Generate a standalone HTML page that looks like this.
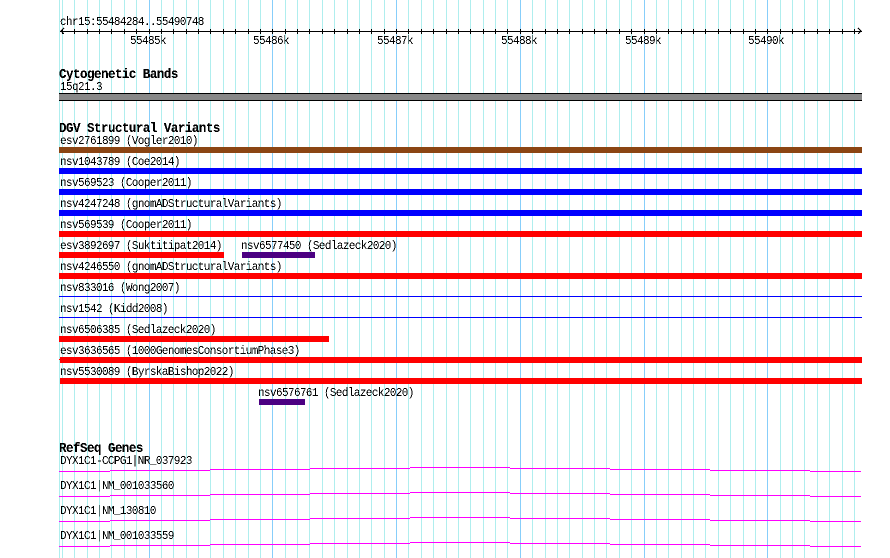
<!DOCTYPE html>
<html>
<head>
<meta charset="utf-8">
<title>chr15:55484284..55490748</title>
<style>
html,body{margin:0;padding:0;background:#fff;width:890px;height:558px;overflow:hidden}
svg{display:block}
text{font-family:"Liberation Mono",monospace;font-size:11px;letter-spacing:-.6px;fill:#000;white-space:pre}
.b{font-weight:bold;font-size:12.5px;letter-spacing:-.5px}
</style>
</head>
<body>
<svg width="890" height="558" viewBox="0 0 890 558" xmlns="http://www.w3.org/2000/svg">
<defs>
<filter id="a" filterUnits="userSpaceOnUse" x="0" y="0" width="890" height="558" color-interpolation-filters="sRGB">
<feComponentTransfer><feFuncA type="discrete" tableValues="0 1"/></feComponentTransfer>
</filter>
<filter id="c" filterUnits="userSpaceOnUse" x="0" y="0" width="890" height="558" color-interpolation-filters="sRGB">
<feComponentTransfer><feFuncA type="discrete" tableValues="0 0 1 1 1"/></feComponentTransfer>
</filter>
</defs>
<g shape-rendering="crispEdges" fill="none">
<path stroke="#afeeee" d="M59.5 0V558M62.5 0V558M74.5 0V558M87.5 0V558M99.5 0V558M111.5 0V558M124.5 0V558M136.5 0V558M161.5 0V558M173.5 0V558M186.5 0V558M198.5 0V558M210.5 0V558M223.5 0V558M235.5 0V558M248.5 0V558M260.5 0V558M285.5 0V558M297.5 0V558M309.5 0V558M322.5 0V558M334.5 0V558M347.5 0V558M359.5 0V558M371.5 0V558M384.5 0V558M408.5 0V558M421.5 0V558M433.5 0V558M446.5 0V558M458.5 0V558M470.5 0V558M483.5 0V558M495.5 0V558M507.5 0V558M532.5 0V558M545.5 0V558M557.5 0V558M569.5 0V558M582.5 0V558M594.5 0V558M606.5 0V558M619.5 0V558M631.5 0V558M656.5 0V558M668.5 0V558M681.5 0V558M693.5 0V558M705.5 0V558M718.5 0V558M730.5 0V558M743.5 0V558M755.5 0V558M780.5 0V558M792.5 0V558M804.5 0V558M817.5 0V558M829.5 0V558M842.5 0V558M854.5 0V558"/>
<path stroke="#87cefa" d="M149.5 0V558M272.5 0V558M396.5 0V558M520.5 0V558M644.5 0V558M767.5 0V558"/>
<path stroke="#000" d="M60 31.5H862M62.5 29V34M74.5 29V34M87.5 29V34M99.5 29V34M111.5 29V34M124.5 29V34M136.5 29V34M149.5 29V34M161.5 29V34M173.5 29V34M186.5 29V34M198.5 29V34M210.5 29V34M223.5 29V34M235.5 29V34M248.5 29V34M260.5 29V34M272.5 29V34M285.5 29V34M297.5 29V34M309.5 29V34M322.5 29V34M334.5 29V34M347.5 29V34M359.5 29V34M371.5 29V34M384.5 29V34M396.5 29V34M408.5 29V34M421.5 29V34M433.5 29V34M446.5 29V34M458.5 29V34M470.5 29V34M483.5 29V34M495.5 29V34M507.5 29V34M520.5 29V34M532.5 29V34M545.5 29V34M557.5 29V34M569.5 29V34M582.5 29V34M594.5 29V34M606.5 29V34M619.5 29V34M631.5 29V34M644.5 29V34M656.5 29V34M668.5 29V34M681.5 29V34M693.5 29V34M705.5 29V34M718.5 29V34M730.5 29V34M743.5 29V34M755.5 29V34M767.5 29V34M780.5 29V34M792.5 29V34M804.5 29V34M817.5 29V34M829.5 29V34M842.5 29V34M854.5 29V34"/>
<path stroke="#000" d="M64 28L61 31L64 34M858 28L861 31L858 34"/>
<rect x="59" y="93" width="803" height="8" fill="#000"/>
<rect x="59" y="94" width="803" height="6" fill="#888888"/>
<rect x="59" y="147" width="803" height="6" fill="#8b4513"/>
<rect x="59" y="168" width="803" height="6" fill="#0000ff"/>
<rect x="59" y="189" width="803" height="6" fill="#0000ff"/>
<rect x="59" y="210" width="803" height="6" fill="#0000ff"/>
<rect x="59" y="231" width="803" height="6" fill="#ff0000"/>
<rect x="59" y="252" width="165" height="6" fill="#ff0000"/>
<rect x="242" y="252" width="73" height="6" fill="#4b0082"/>
<rect x="59" y="273" width="803" height="6" fill="#ff0000"/>
<rect x="59" y="296" width="803" height="1" fill="#0000ff"/>
<rect x="59" y="317" width="803" height="1" fill="#0000ff"/>
<rect x="59" y="336" width="270" height="6" fill="#ff0000"/>
<rect x="60" y="357" width="802" height="6" fill="#ff0000"/>
<rect x="59" y="359" width="1" height="1" fill="#ff0000"/>
<rect x="60" y="378" width="802" height="6" fill="#ff0000"/>
<rect x="259" y="399" width="46" height="6" fill="#4b0082"/>
<path stroke="#ff00ff" d="M59 471.5H110M110 470.5H210M210 469.5H310M310 468.5H410M410 467.5H510M510 468.5H610M610 469.5H710M710 470.5H810M810 471.5H861"/>
<path stroke="#ff00ff" d="M59 496.5H110M110 495.5H210M210 494.5H310M310 493.5H410M410 492.5H510M510 493.5H610M610 494.5H710M710 495.5H810M810 496.5H861"/>
<path stroke="#ff00ff" d="M59 521.5H110M110 520.5H210M210 519.5H310M310 518.5H410M410 517.5H510M510 518.5H610M610 519.5H710M710 520.5H810M810 521.5H861"/>
<path stroke="#ff00ff" d="M59 546.5H110M110 545.5H210M210 544.5H310M310 543.5H410M410 542.5H510M510 543.5H610M610 544.5H710M710 545.5H810M810 546.5H861"/>
</g>
<g filter="url(#c)">
<text class="b" transform="translate(59 78) scale(1 1.1)">Cytogenetic Bands</text>
<text class="b" transform="translate(59 132) scale(1 1.1)">DGV Structural Variants</text>
<text class="b" transform="translate(59 452) scale(1 1.1)">RefSeq Genes</text>
</g>
<g filter="url(#a)">
<text transform="translate(60 25) scale(1 1.1)">chr15:55484284..55490748</text>
<text transform="translate(130 44) scale(1 1.1)">55485k</text>
<text transform="translate(253 44) scale(1 1.1)">55486k</text>
<text transform="translate(377 44) scale(1 1.1)">55487k</text>
<text transform="translate(501 44) scale(1 1.1)">55488k</text>
<text transform="translate(625 44) scale(1 1.1)">55489k</text>
<text transform="translate(748 44) scale(1 1.1)">55490k</text>
<text transform="translate(60 90) scale(1 1.1)">15q21.3</text>
<text transform="translate(60 144) scale(1 1.1)">esv2761899 (Vogler2010)</text>
<text transform="translate(60 165) scale(1 1.1)">nsv1043789 (Coe2014)</text>
<text transform="translate(60 186) scale(1 1.1)">nsv569523 (Cooper2011)</text>
<text transform="translate(60 207) scale(1 1.1)">nsv4247248 (gnomADStructuralVariants)</text>
<text transform="translate(60 228) scale(1 1.1)">nsv569539 (Cooper2011)</text>
<text transform="translate(60 249) scale(1 1.1)">esv3892697 (Suktitipat2014)</text>
<text transform="translate(241 249) scale(1 1.1)">nsv6577450 (Sedlazeck2020)</text>
<text transform="translate(60 270) scale(1 1.1)">nsv4246550 (gnomADStructuralVariants)</text>
<text transform="translate(60 291) scale(1 1.1)">nsv833016 (Wong2007)</text>
<text transform="translate(60 312) scale(1 1.1)">nsv1542 (Kidd2008)</text>
<text transform="translate(60 333) scale(1 1.1)">nsv6506385 (Sedlazeck2020)</text>
<text transform="translate(60 354) scale(1 1.1)">esv3636565 (1000GenomesConsortiumPhase3)</text>
<text transform="translate(60 375) scale(1 1.1)">nsv5530089 (ByrskaBishop2022)</text>
<text transform="translate(258 396) scale(1 1.1)">nsv6576761 (Sedlazeck2020)</text>
<text transform="translate(60 464) scale(1 1.1)">DYX1C1-CCPG1|NR_037923</text>
<text transform="translate(60 489) scale(1 1.1)">DYX1C1|NM_001033560</text>
<text transform="translate(60 514) scale(1 1.1)">DYX1C1|NM_130810</text>
<text transform="translate(60 539) scale(1 1.1)">DYX1C1|NM_001033559</text>
</g>
</svg>
</body>
</html>
